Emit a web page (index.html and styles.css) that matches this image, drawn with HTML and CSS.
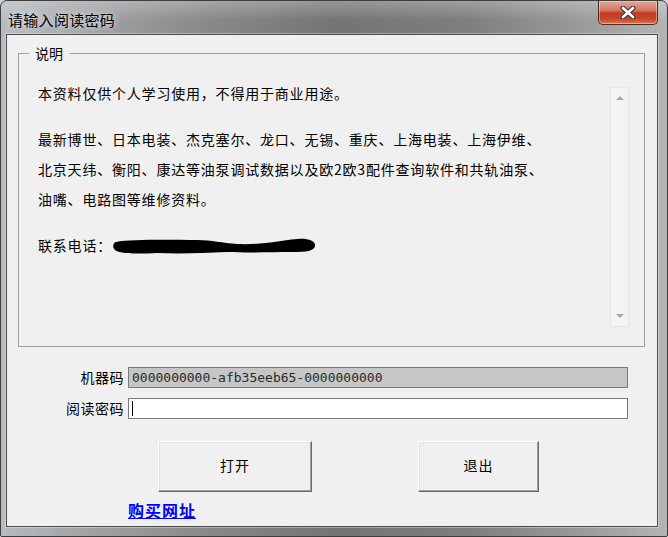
FILE: index.html
```html
<!DOCTYPE html>
<html lang="zh-CN">
<head>
    <meta charset="UTF-8">
    <title>请输入阅读密码</title>
    <link rel="stylesheet" href="styles.css">
</head>
<body>
    <div class="window">
        <div class="titlebar">
            <span class="title">请输入阅读密码</span>
            <button class="close" title="关闭">
                <svg width="16" height="13" viewBox="0 0 16 13">
                    <path d="M3 2 L13 11 M13 2 L3 11" stroke="#3b3b3b" stroke-width="5" stroke-linecap="round"/>
                    <path d="M3 2 L13 11 M13 2 L3 11" stroke="#fff" stroke-width="2.6" stroke-linecap="round"/>
                </svg>
            </button>
        </div>
        <div class="client">
            <fieldset class="notice">
                <legend>说明</legend>
                <div class="memo">
                    <div class="memo-text">
                        <p>本资料仅供个人学习使用，不得用于商业用途。</p>
                        <p>最新博世、日本电装、杰克塞尔、龙口、无锡、重庆、上海电装、上海伊维、<br>北京天纬、衡阳、康达等油泵调试数据以及欧2欧3配件查询软件和共轨油泵、<br>油嘴、电路图等维修资料。</p>
                        <p>联系电话：<svg class="redact" width="204" height="18" viewBox="0 0 204 18"><path d="M4 5 C20 2 60 3 85 3 C100 3 110 6 125 7 C150 8 165 4 185 2 C196 1 204 4 203 9 C202 14 195 15 180 15 C160 15 140 16 115 15 C90 16 70 17 45 16 C25 17 8 17 3 13 C0 10 1 6 4 5 Z" fill="#000"/></svg></p>
                    </div>
                    <div class="scroll">
                        <span class="arrow up"></span>
                        <span class="arrow down"></span>
                    </div>
                </div>
            </fieldset>

            <div class="form">
                <label>机器码</label>
                <div class="field readonly">0000000000-afb35eeb65-0000000000</div>
                <label>阅读密码</label>
                <div class="field"><span class="caret"></span></div>
            </div>

            <div class="actions">
                <button class="btn btn-open">打开</button>
                <button class="btn btn-quit">退出</button>
            </div>

            <div class="buy-row">
                <a class="buy" href="#">购买网址</a>
            </div>
        </div>
    </div>
</body>
</html>
```

FILE: styles.css
```css
* {
    margin: 0;
    padding: 0;
    box-sizing: border-box;
}

body {
    background: #d4d4d4;
    font-family: "Noto Sans CJK SC", sans-serif;
    color: #000;
}

.window {
    width: 668px;
    height: 537px;
    display: flex;
    flex-direction: column;
    border: 1px solid #3e3e3e;
    border-radius: 7px 7px 2px 2px;
    background: linear-gradient(to right, #b6bcc2 0%, #a2a4a6 12%, #8a8a8a 30%, #747474 50%, #7e7e7e 70%, #9c9c9c 88%, #b4b4b4 100%);
}

.titlebar {
    height: 33px;
    display: flex;
    align-items: flex-start;
    background: linear-gradient(to bottom, rgba(255, 255, 255, 0.25), rgba(255, 255, 255, 0) 60%);
    border-radius: 6px 6px 0 0;
}

.title {
    padding: 10px 0 0 7px;
    font-size: 15px;
    line-height: 18px;
    letter-spacing: 0.3px;
    text-shadow: 0 0 6px rgba(255, 255, 255, 0.7), 0 0 10px rgba(255, 255, 255, 0.5);
}

.close {
    margin-left: auto;
    margin-right: 9px;
    width: 60px;
    height: 24px;
    border: 1px solid #4f2a22;
    border-top: none;
    border-radius: 0 0 5px 5px;
    background: linear-gradient(to bottom, #e2a797 0%, #d57a63 40%, #c23c23 52%, #c6462c 78%, #dc7656 100%);
    box-shadow: inset 0 0 0 1px rgba(255, 220, 210, 0.5);
    display: flex;
    align-items: center;
    justify-content: center;
    padding-bottom: 1px;
}

.client {
    flex: 1;
    margin: 0 9px 9px 5px;
    border: 1px solid #4c4c4c;
    background: #f0f0f0;
    box-shadow: 0 0 0 1px rgba(255, 255, 255, 0.35);
}

.notice {
    margin: 11px 12px 0 11px;
    padding: 18px 15px 19px 0;
    border: 1px solid #a0a0a0;
}

.notice legend {
    margin-left: 10px;
    padding: 0 6px;
    font-size: 14px;
    line-height: 14px;
}

.memo {
    margin-left: 19px;
    height: 249px;
    display: flex;
}

.memo-text {
    flex: 1;
    font-size: 14px;
    line-height: 30px;
    letter-spacing: 0.8px;
}

.memo-text p {
    margin-bottom: 16px;
}

.redact {
    vertical-align: middle;
    margin-top: -3px;
}

.scroll {
    width: 19px;
    height: 240px;
    margin-top: 9px;
    background: #f4f4f4;
    border: 1px solid #e6e6e6;
    display: flex;
    flex-direction: column;
    justify-content: space-between;
    align-items: center;
    padding: 8px 0;
}

.arrow {
    width: 0;
    height: 0;
    border-left: 4px solid transparent;
    border-right: 4px solid transparent;
}

.arrow.up {
    border-bottom: 4px solid #a6a6a6;
}

.arrow.down {
    border-top: 4px solid #a6a6a6;
}

.form {
    margin-top: 20px;
    display: grid;
    grid-template-columns: 117px 500px;
    grid-auto-rows: 21px;
    column-gap: 4px;
    row-gap: 10px;
}

.form label {
    text-align: right;
    font-size: 14px;
    line-height: 20px;
    letter-spacing: 0.5px;
}

.field {
    border: 1px solid #7a7a7a;
    background: #fff;
    padding-left: 3px;
    font-family: "DejaVu Sans Mono", monospace;
    font-size: 13px;
    line-height: 19px;
    color: #2a2a2a;
    display: flex;
    align-items: center;
}

.field.readonly {
    background: #c6c6c6;
}

.caret {
    width: 1px;
    height: 15px;
    background: #000;
}

.actions {
    margin-top: 22px;
    padding-left: 151px;
    display: flex;
    gap: 106px;
}

.btn {
    height: 51px;
    padding-bottom: 4px;
    background: #f0f0f0;
    border: 1px solid;
    border-color: #fff #696969 #696969 #fff;
    box-shadow: inset -1px -1px 0 #a0a0a0, inset 1px 1px 0 #e3e3e3;
    font-family: "Noto Sans CJK SC", sans-serif;
    font-size: 14px;
    letter-spacing: 1px;
    color: #000;
}

.btn-open {
    width: 154px;
}

.btn-quit {
    width: 121px;
}

.buy-row {
    margin-top: 6px;
    padding-left: 121px;
}

.buy {
    font-size: 16px;
    line-height: 18px;
    font-weight: bold;
    letter-spacing: 1px;
    color: #0000ff;
    text-decoration: underline;
}
```
